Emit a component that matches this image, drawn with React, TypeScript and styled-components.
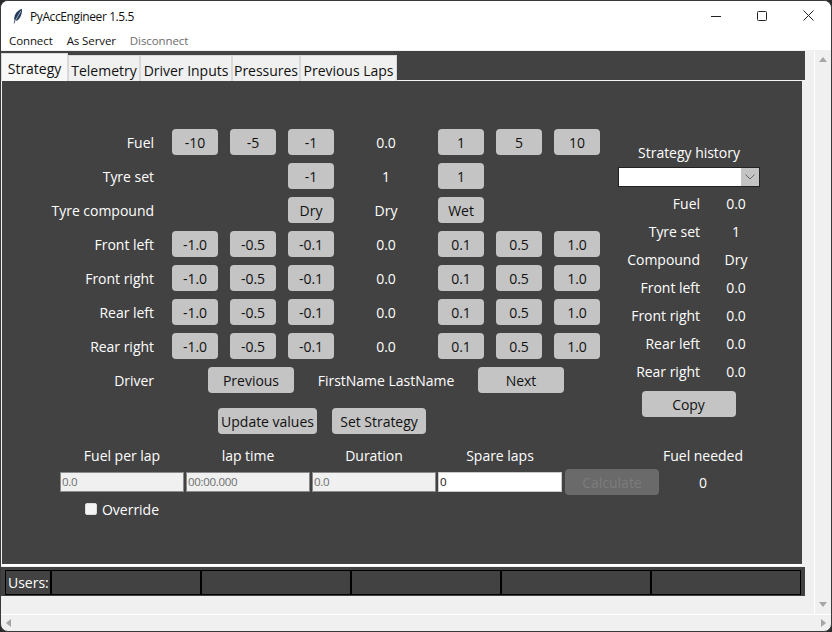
import React from "react";
import styled, { createGlobalStyle } from "styled-components";

const Global = createGlobalStyle`
  html, body { margin: 0; padding: 0; background: #2b2b2b; }
  * { box-sizing: border-box; }
`;
const FONT = `"Open Sans", "Noto Sans", "Liberation Sans", sans-serif`;

const Win = styled.div`
  width: 832px; height: 632px; display: flex; flex-direction: column; overflow: hidden;
  background: #f0f0f0; border: 1px solid #3a3a3a;
  border-radius: 8px; font-family: ${FONT}; font-size: 14px; letter-spacing: -0.02px;
`;
const TitleBar = styled.div`
  height: 29px; background: #fff; display: flex; align-items: center; flex: none; padding-left: 11px;
`;
const TitleText = styled.span`
  font-size: 12px; letter-spacing: -0.4px; color: #111; margin-left: 6px; flex: 1; padding-top: 2px;
`;
const WinBtn = styled.div`
  width: 46px; height: 29px; display: flex; align-items: center; justify-content: center;
`;
const MenuBar = styled.div`
  height: 20px; background: #fff; flex: none; display: flex; align-items: center; padding-left: 8px; gap: 14px;
  font-size: 11.5px; letter-spacing: -0.1px;
`;
const MenuItem = styled.span<{ $off?: boolean }>`
  color: ${(p) => (p.$off ? "#6d6d6d" : "#111")};
`;
const Body = styled.div`
  flex: 1; display: flex; min-height: 0; padding-top: 1px;
`;
const Main = styled.div`
  width: 814px; display: flex; flex-direction: column;
`;
const VBar = styled.div`
  width: 17px; border-left: 1px solid #fff; display: flex; flex-direction: column;
  justify-content: space-between; align-items: center; padding: 6px 0 7px;
`;
const HBar = styled.div`
  height: 17px; flex: none; border-top: 1px solid #fff; display: flex; justify-content: space-between;
  align-items: center; padding: 0 5px;
`;
const Tabs = styled.div`
  height: 30px; width: 804px; background: #424242; display: flex; align-items: flex-end; flex: none;
  border-bottom: 1px solid #f4f4f4;
`;
const Tab = styled.div<{ $on?: boolean; $w: number }>`
  height: ${(p) => (p.$on ? 28 : 26)}px; width: ${(p) => p.$w}px; background: ${(p) => (p.$on ? "#f8f8f8" : "#f0f0f0")};
  border: 1px solid #d9d9d9; border-bottom: none; margin-bottom: -1px; color: #111; text-align: center;
  line-height: ${(p) => (p.$on ? 30 : 29)}px; white-space: nowrap; flex: none;
`;
const Panel = styled.div`
  width: 801px; height: 485px; background: #424242; flex: none; border-bottom: 2px solid #fff; border-left: 1px solid #f4f4f4;
  display: flex; flex-direction: column; color: #fff; padding-top: 44px;
`;
const Top = styled.div`
  display: flex; align-items: flex-start; height: 318px; flex: none;
`;
const Form = styled.div`
  width: 616px; flex: none; display: flex; flex-direction: column;
`;
const Row = styled.div`
  height: 34px; display: flex; align-items: center; flex: none;
`;
const Label = styled.div`
  width: 152px; text-align: right; flex: none; margin-right: 18px; white-space: nowrap;
`;
const Btn = styled.div<{ $w?: number; $off?: boolean }>`
  width: ${(p) => p.$w ?? 46}px; height: 26px; flex: none; background: ${(p) => (p.$off ? "#6a6a6a" : "#c4c4c4")};
  border-radius: 4px; color: ${(p) => (p.$off ? "#7c7c7c" : "#111")}; display: flex; align-items: center; justify-content: center;
  white-space: nowrap;
`;
const Group = styled.div`
  width: 162px; flex: none; display: flex; gap: 12px; justify-content: flex-end;
`;
const GroupR = styled(Group)`
  justify-content: flex-start;
`;
const Value = styled.div`
  width: 104px; text-align: center; flex: none;
`;
const DriverRow = styled(Row)`
  padding-left: 206px;
`;
const DriverLabel = styled.div`
  width: 206px; margin-left: -206px; padding-right: 54px; text-align: right; flex: none;
`;
const DriverName = styled.div`
  width: 184px; text-align: center; flex: none; white-space: nowrap;
`;
const ActionRow = styled.div`
  display: flex; gap: 15px; padding-left: 216px; margin-top: 11px;
`;
const Side = styled.div`
  width: 142px; flex: none; display: flex; flex-direction: column; align-items: stretch; margin-top: 16px;
`;
const SideTitle = styled.div`
  text-align: center; height: 26px; line-height: 24px; white-space: nowrap;
`;
const Combo = styled.div`
  height: 20px; background: #fff; border: 1px solid #222; display: flex; justify-content: flex-end; margin-bottom: 2px;
`;
const ComboArrow = styled.div`
  width: 18px; background: #c4c4c4; display: flex; align-items: center; justify-content: center;
`;
const SideRow = styled.div`
  height: 28px; display: flex; align-items: center;
`;
const SideLabel = styled.div`
  width: 82px; text-align: right; flex: none; white-space: nowrap;
`;
const SideVal = styled.div`
  width: 72px; text-align: center; flex: none; margin-right: -12px;
`;
const CopyWrap = styled.div`
  display: flex; justify-content: center; padding-right: 1px; margin-top: 6px;
`;
const Bottom = styled.div`
  display: grid; grid-template-columns: 124px 124px 124px 124px 95px 84px; column-gap: 2px; padding-left: 58px;
  align-items: center; grid-template-rows: 25px 28px;
`;
const Head = styled.div`
  text-align: center; white-space: nowrap;
`;
const Field = styled.div<{ $on?: boolean }>`
  height: 20px; background: ${(p) => (p.$on ? "#fff" : "#f0f0f0")}; border: 1px solid ${(p) => (p.$on ? "#c9c9c9" : "#8a8a8a")};
  color: ${(p) => (p.$on ? "#111" : "#6d6d6d")}; font-size: 11.5px; line-height: 18px; padding-left: 1px; letter-spacing: -0.3px;
`;
const Calc = styled.div`
  display: flex; justify-content: flex-end;
`;
const Out = styled.div`
  text-align: center;
`;
const OverrideRow = styled.div`
  display: flex; align-items: center; gap: 5px; padding-left: 83px; margin-top: 3px; height: 20px;
`;
const Check = styled.div`
  width: 12px; height: 12px; background: #f4f4f4; border-radius: 2px; border: 1px solid #ddd;
`;
const Status = styled.div`
  width: 804px; height: 29px; background: #424242; flex: none; margin-top: 1px; padding: 3px 0 0 4px; display: flex; color: #fff;
`;
const Cell = styled.div<{ $w: number }>`
  width: ${(p) => p.$w}px; height: 25px; border: 1px solid #000; flex: none; line-height: 23px; padding-left: 2px;
`;
const Tri = styled.div<{ $d: "u" | "d" | "l" | "r" }>`
  width: 0; height: 0; border-style: solid;
  ${(p) =>
    p.$d === "u" ? "border-width: 0 4px 5px 4px; border-color: transparent transparent #a6a6a6 transparent;"
    : p.$d === "d" ? "border-width: 5px 4px 0 4px; border-color: #a6a6a6 transparent transparent transparent;"
    : p.$d === "l" ? "border-width: 4px 5px 4px 0; border-color: transparent #a6a6a6 transparent transparent;"
    : "border-width: 4px 0 4px 5px; border-color: transparent transparent transparent #a6a6a6;"}
`;

const fuel = [["-10", "-5", "-1"], "0.0", ["1", "5", "10"]] as const;
const adj = [["-1.0", "-0.5", "-0.1"], "0.0", ["0.1", "0.5", "1.0"]] as const;

type D = readonly [readonly string[], string, readonly string[]];

const Adjust = ({ label, d }: { label: string; d: D }) => (
  <Row>
    <Label>{label}</Label>
    <Group>{d[0].map((t) => <Btn key={t}>{t}</Btn>)}</Group>
    <Value>{d[1]}</Value>
    <GroupR>{d[2].map((t) => <Btn key={t}>{t}</Btn>)}</GroupR>
  </Row>
);

const Single = ({ label, a, v, b }: { label: string; a: string; v: string; b: string }) => (
  <Row>
    <Label>{label}</Label>
    <Group><Btn>{a}</Btn></Group>
    <Value>{v}</Value>
    <GroupR><Btn>{b}</Btn></GroupR>
  </Row>
);

export default function App() {
  return (
    <Win>
      <Global />
      <TitleBar>
        <svg width="12" height="16" viewBox="0 0 12 16">
          <path d="M10.5 0.8C6.5 1.6 3.2 5 2.4 9.2c-.3 1.5-.1 2.6.2 3.3L1.6 15.2l.7.3 1-2.5c2.6-.4 4.8-2.8 5.9-6.1.6-1.9 1-4 .8-6.1z" fill="#243a5a" />
          <path d="M8.8 3L3.2 13" stroke="#fff" strokeWidth="0.6" />
        </svg>
        <TitleText>PyAccEngineer 1.5.5</TitleText>
        <WinBtn><svg width="10" height="10"><path d="M0 5.5h10" stroke="#222" /></svg></WinBtn>
        <WinBtn><svg width="10" height="10"><rect x=".5" y=".5" width="9" height="9" rx="1" fill="none" stroke="#222" /></svg></WinBtn>
        <WinBtn><svg width="11" height="11"><path d="M.5.5l10 10M10.5.5l-10 10" stroke="#222" /></svg></WinBtn>
      </TitleBar>
      <MenuBar>
        <MenuItem>Connect</MenuItem>
        <MenuItem>As Server</MenuItem>
        <MenuItem $off>Disconnect</MenuItem>
      </MenuBar>
      <Body>
        <Main>
          <Tabs>
            <Tab $on $w={67}>Strategy</Tab>
            <Tab $w={72}>Telemetry</Tab>
            <Tab $w={92}>Driver Inputs</Tab>
            <Tab $w={68}>Pressures</Tab>
            <Tab $w={97}>Previous Laps</Tab>
          </Tabs>
          <Panel>
            <Top>
              <Form>
                <Adjust label="Fuel" d={fuel} />
                <Single label="Tyre set" a="-1" v="1" b="1" />
                <Single label="Tyre compound" a="Dry" v="Dry" b="Wet" />
                <Adjust label="Front left" d={adj} />
                <Adjust label="Front right" d={adj} />
                <Adjust label="Rear left" d={adj} />
                <Adjust label="Rear right" d={adj} />
                <DriverRow>
                  <DriverLabel>Driver</DriverLabel>
                  <Btn $w={86}>Previous</Btn>
                  <DriverName>FirstName LastName</DriverName>
                  <Btn $w={86}>Next</Btn>
                </DriverRow>
                <ActionRow>
                  <Btn $w={99}>Update values</Btn>
                  <Btn $w={94}>Set Strategy</Btn>
                </ActionRow>
              </Form>
              <Side>
                <SideTitle>Strategy history</SideTitle>
                <Combo>
                  <ComboArrow>
                    <svg width="10" height="6"><path d="M.5.5l4.5 4.5L9.5.5" fill="none" stroke="#666" /></svg>
                  </ComboArrow>
                </Combo>
                {[["Fuel", "0.0"], ["Tyre set", "1"], ["Compound", "Dry"], ["Front left", "0.0"], ["Front right", "0.0"], ["Rear left", "0.0"], ["Rear right", "0.0"]].map(([l, v]) => (
                  <SideRow key={l}><SideLabel>{l}</SideLabel><SideVal>{v}</SideVal></SideRow>
                ))}
                <CopyWrap><Btn $w={94}>Copy</Btn></CopyWrap>
              </Side>
            </Top>
            <Bottom>
              <Head>Fuel per lap</Head>
              <Head>lap time</Head>
              <Head>Duration</Head>
              <Head>Spare laps</Head>
              <span />
              <Head>Fuel needed</Head>
              <Field>0.0</Field>
              <Field>00:00.000</Field>
              <Field>0.0</Field>
              <Field $on>0</Field>
              <Calc><Btn $w={94} $off>Calculate</Btn></Calc>
              <Out>0</Out>
            </Bottom>
            <OverrideRow><Check />Override</OverrideRow>
          </Panel>
          <Status>
            <Cell $w={46}>Users:</Cell>
            <Cell $w={150} />
            <Cell $w={150} />
            <Cell $w={150} />
            <Cell $w={150} />
            <Cell $w={150} />
          </Status>
        </Main>
        <VBar><Tri $d="u" /><Tri $d="d" /></VBar>
      </Body>
      <HBar><Tri $d="l" /><Tri $d="r" /></HBar>
    </Win>
  );
}
